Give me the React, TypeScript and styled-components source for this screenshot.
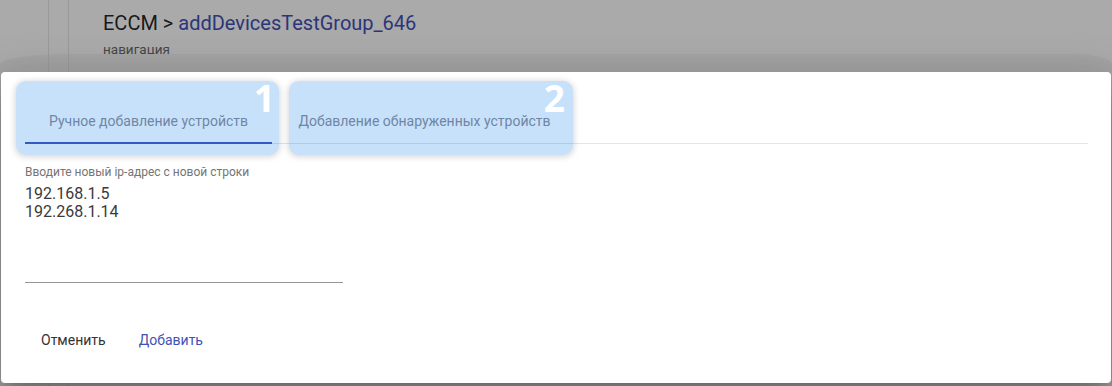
import React from "react";
import styled, { createGlobalStyle } from "styled-components";

const Global = createGlobalStyle`
  html, body { margin: 0; padding: 0; }
  body { font-family: Roboto, "Noto Sans", Arial, sans-serif; background: #aaaaaa; }
  * { box-sizing: border-box; }
`;

const Page = styled.div`
  position: relative;
  width: 1112px;
  height: 386px;
  overflow: hidden;
  background: #ffffff;
  display: flex;
  flex-direction: column;
`;

const Header = styled.header`
  height: 54px;
  padding: 12px 0 0 103px;
  display: flex;
  flex-direction: column;
  gap: 8px;
`;

const Crumbs = styled.h1`
  margin: 0;
  font-size: 20px;
  line-height: 22px;
  font-weight: 400;
  color: rgba(0, 0, 0, 0.87);
`;

const CrumbLink = styled.span`
  color: #3f51b5;
`;

const SubTitle = styled.div`
  font-size: 13.5px;
  line-height: 15px;
  color: #6a6a6a;
`;

const Card = styled.section`
  flex: 1;
  background: #f5f5f5;
  border-radius: 70px 40px 0 0 / 10px 10px 0 0;
`;

const Rails = styled.div`
  position: absolute;
  top: 0;
  bottom: 0;
  left: 48px;
  width: 21px;
  border-left: 1px solid #e8e8e8;
  border-right: 1px solid #e6e6e6;
`;

const Backdrop = styled.div`
  position: absolute;
  inset: 0;
  background: rgba(0, 0, 0, 0.333);
`;

const Dialog = styled.div`
  position: absolute;
  left: 1px;
  top: 72px;
  width: 1110px;
  height: 311px;
  background: #ffffff;
  border-radius: 4px;
  box-shadow: 0 11px 15px -7px rgba(0, 0, 0, 0.2), 0 24px 38px 3px rgba(0, 0, 0, 0.14),
    0 9px 46px 8px rgba(0, 0, 0, 0.12);
  padding: 24px 23px 0 24px;
  display: flex;
  flex-direction: column;
`;

const TabsRow = styled.div`
  position: relative;
  display: flex;
  height: 48px;
  isolation: isolate;
  &::after {
    content: "";
    position: absolute;
    left: 0;
    right: 0;
    bottom: 0;
    height: 1px;
    background: rgba(0, 0, 0, 0.1);
    z-index: 1;
  }
`;

const Tab = styled.div<{ $w: number; $l: number; $r: number }>`
  position: relative;
  width: ${(p) => p.$w}px;
  display: flex;
  align-items: center;
  justify-content: center;
  &::before {
    content: "";
    position: absolute;
    top: -15px;
    bottom: -11px;
    left: ${(p) => p.$l}px;
    right: ${(p) => p.$r}px;
    background: #c8e1fb;
    border-radius: 10px;
    box-shadow: 0 1px 6px 1px rgba(0, 0, 0, 0.16);
    z-index: 0;
  }
`;

const TabLabel = styled.span`
  position: relative;
  z-index: 2;
  font-size: 14px;
  line-height: 16px;
  padding-top: 1px;
  color: #6f86a4;
  white-space: nowrap;
`;

const Indicator = styled.span`
  position: absolute;
  left: 0;
  right: 0;
  bottom: 0;
  height: 2px;
  background: #3558c6;
  z-index: 3;
`;

const Badge = styled.span<{ $r: number }>`
  position: absolute;
  top: -20px;
  right: ${(p) => p.$r}px;
  z-index: 2;
  color: #ffffff;
  font-family: "Open Sans", Roboto, sans-serif;
  font-weight: 700;
  font-size: 37px;
  line-height: 44px;
`;

const Field = styled.div`
  width: 318px;
  margin-top: 21px;
  display: flex;
  flex-direction: column;
  border-bottom: 1px solid #949494;
`;

const FieldLabel = styled.label`
  font-size: 12px;
  line-height: 14px;
  color: #757575;
`;

const FieldValue = styled.div`
  margin-top: 6px;
  height: 97px;
  font-size: 16px;
  line-height: 18px;
  color: #3a3a3a;
  white-space: pre;
`;

const Actions = styled.div`
  display: flex;
  align-items: center;
  gap: 17px;
  margin-top: 43px;
  padding-left: 8px;
`;

const Button = styled.button<{ $primary?: boolean }>`
  border: none;
  background: none;
  padding: 6px 8px;
  font-family: Roboto, sans-serif;
  font-size: 14px;
  line-height: 16px;
  color: ${(p) => (p.$primary ? "#3f51b5" : "#333333")};
  cursor: pointer;
`;

export default function App() {
  return (
    <>
      <Global />
      <Page>
        <Header>
          <Crumbs>
            ECCM &gt; <CrumbLink>addDevicesTestGroup_646</CrumbLink>
          </Crumbs>
          <SubTitle>навигация</SubTitle>
        </Header>
        <Card />
        <Rails />
        <Backdrop />
        <Dialog>
          <TabsRow>
            <Tab $w={247} $l={-9} $r={-7}>
              <TabLabel>Ручное добавление устройств</TabLabel>
              <Indicator />
              <Badge $r={-3}>1</Badge>
            </Tab>
            <Tab $w={305} $l={17} $r={4}>
              <TabLabel>Добавление обнаруженных устройств</TabLabel>
              <Badge $r={12}>2</Badge>
            </Tab>
          </TabsRow>
          <Field>
            <FieldLabel>Вводите новый ip-адрес с новой строки</FieldLabel>
            <FieldValue>{"192.168.1.5\n192.268.1.14"}</FieldValue>
          </Field>
          <Actions>
            <Button>Отменить</Button>
            <Button $primary>Добавить</Button>
          </Actions>
        </Dialog>
      </Page>
    </>
  );
}
